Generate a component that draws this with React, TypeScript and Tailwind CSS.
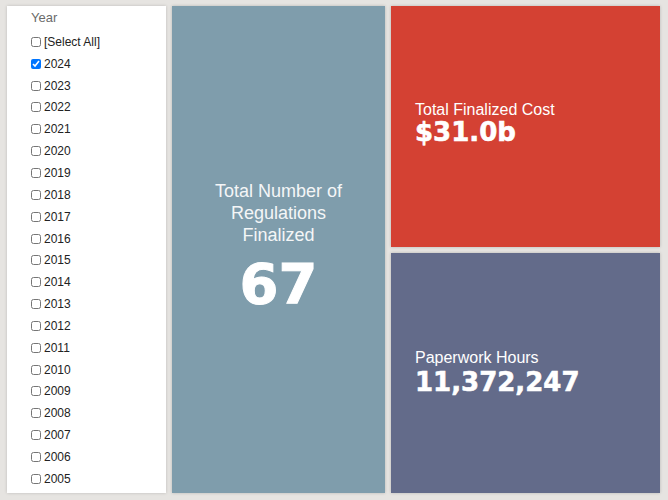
import React from "react";

const years = [
  2024, 2023, 2022, 2021, 2020, 2019, 2018, 2017, 2016, 2015, 2014, 2013, 2012,
  2011, 2010, 2009, 2008, 2007, 2006, 2005,
];

const numFont = { fontFamily: '"DejaVu Sans", sans-serif' };

function YearFilter() {
  return (
    <div className="w-[159px] shrink-0 bg-white shadow-[0_0_3px_rgba(0,0,0,0.18)] pl-[24px] pt-[2px]">
      <div className="text-[13px] text-[#6b6b6b] leading-[20px] mb-[3px]">Year</div>
      <label className="flex items-center h-[21.85px] text-[12px] text-[#222]">
        <input type="checkbox" className="w-[10px] h-[10px] m-0 mr-[3px]" />
        [Select All]
      </label>
      {years.map((y) => (
        <label key={y} className="flex items-center h-[21.85px] text-[12px] text-[#222]">
          <input
            type="checkbox"
            defaultChecked={y === 2024}
            className="w-[10px] h-[10px] m-0 mr-[3px]"
          />
          {y}
        </label>
      ))}
    </div>
  );
}

export default function App() {
  return (
    <div
      className="w-[668px] h-[500px] bg-[#e6e4e1] flex gap-[6px] pl-[7px] pr-[8px] pt-[6px] pb-[7px]"
      style={{ fontFamily: '"Liberation Sans", Arial, sans-serif' }}
    >
      <YearFilter />

      {/* regulations count */}
      <div className="w-[213px] shrink-0 bg-[#7f9dac] shadow-[0_0_3px_rgba(0,0,0,0.2)] flex flex-col items-center justify-center text-white pb-[4px]">
        <div className="text-[18px] leading-[22px] text-center text-[#f4f6f7]">
          Total Number of
          <br />
          Regulations
          <br />
          Finalized
        </div>
        <div
          className="text-[56px] font-bold leading-[64px] mt-[6px] [-webkit-text-stroke:1px_white]"
          style={numFont}
        >
          67
        </div>
      </div>

      <div className="flex-1 flex flex-col gap-[6px]">
        <div className="h-[241px] bg-[#d44133] shadow-[0_0_3px_rgba(0,0,0,0.2)] flex flex-col justify-center pl-[24px] text-white pb-[8px]">
          <div className="text-[16px] leading-[19px]">Total Finalized Cost</div>
          <div
            className="text-[26px] font-bold leading-[26px] [-webkit-text-stroke:0.6px_white]"
            style={numFont}
          >
            $31.0b
          </div>
        </div>
        <div className="flex-1 bg-[#636b8a] shadow-[0_0_3px_rgba(0,0,0,0.2)] flex flex-col justify-center pl-[24px] text-white pb-[2px]">
          <div className="text-[16px] leading-[19px]">Paperwork Hours</div>
          <div
            className="text-[26px] font-bold leading-[30px] [-webkit-text-stroke:0.6px_white]"
            style={numFont}
          >
            11,372,247
          </div>
        </div>
      </div>
    </div>
  );
}
